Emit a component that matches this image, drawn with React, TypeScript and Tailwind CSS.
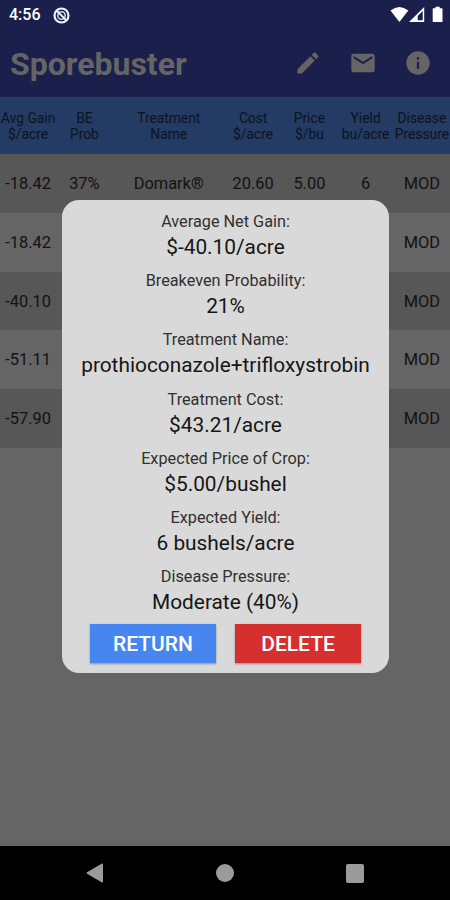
import React from "react";

const GRID = "grid grid-cols-[1fr_1fr_2fr_1fr_1fr_1fr_1fr]";

const HEADERS: [string, string][] = [
  ["Avg Gain", "$/acre"],
  ["BE", "Prob"],
  ["Treatment", "Name"],
  ["Cost", "$/acre"],
  ["Price", "$/bu"],
  ["Yield", "bu/acre"],
  ["Disease", "Pressure"],
];

const ROWS: string[][] = [
  ["-18.42", "37%", "Domark®", "20.60", "5.00", "6", "MOD"],
  ["-18.42", "", "", "", "", "", "MOD"],
  ["-40.10", "", "", "", "", "", "MOD"],
  ["-51.11", "", "", "", "", "", "MOD"],
  ["-57.90", "", "", "", "", "", "MOD"],
];

const DETAILS: [string, string][] = [
  ["Average Net Gain:", "$-40.10/acre"],
  ["Breakeven Probability:", "21%"],
  ["Treatment Name:", "prothioconazole+trifloxystrobin"],
  ["Treatment Cost:", "$43.21/acre"],
  ["Expected Price of Crop:", "$5.00/bushel"],
  ["Expected Yield:", "6 bushels/acre"],
  ["Disease Pressure:", "Moderate (40%)"],
];

function StatusBar() {
  return (
    <div className="flex h-[30px] items-center pl-[9px] pr-[7px] text-white">
      <span className="w-[32px] whitespace-nowrap text-[16px] font-medium leading-[30px]">4:56</span>
      <svg className="ml-[12px]" width="17" height="17" viewBox="0 0 17 17" fill="none" stroke="#f1f1f8">
        <circle cx="8.5" cy="8.5" r="7" strokeWidth="2.2" />
        <circle cx="8.5" cy="8.5" r="3.7" strokeWidth="1.6" strokeOpacity="0.85" />
        <path d="M4 4L13 13" strokeWidth="1.8" />
      </svg>
      <svg className="ml-auto" width="53" height="18" viewBox="0 0 53 18" fill="#fff">
        <path d="M0.500 4.600Q9.500 -2.600 18.300 4.600L9.400 16z" />
        <path fillRule="evenodd" d="M34.200 1V16H19zM32.700 5L27.700 10V14.200H32.700z" />
        <path d="M43.300 2.300h2.200V.7h4.200v1.600h2.200q.6 0 .6.6v12.500q0 .6-.6.6h-8.600q-.6 0-.6-.6V2.900q0-.6.6-.6z" />
      </svg>
    </div>
  );
}

function AppBar() {
  return (
    <div className="flex h-[67px] items-center pl-[10px] pr-[18px] text-[#656565]">
      <h1 className="text-[32px] font-bold leading-none">Sporebuster</h1>
      <div className="mb-[2px] ml-auto flex items-center gap-[27px]">
        <svg width="28" height="28" viewBox="0 0 24 24" fill="currentColor">
          <path d="M3 17.25V21h3.75L17.81 9.94l-3.75-3.75L3 17.25zM20.71 7.04a1 1 0 0 0 0-1.41l-2.34-2.34a1 1 0 0 0-1.41 0l-1.83 1.83 3.75 3.75 1.83-1.83z" />
        </svg>
        <svg width="28" height="28" viewBox="0 0 24 24" fill="currentColor">
          <path d="M20 4H4c-1.1 0-2 .9-2 2v12c0 1.100.9 2 2 2h16c1.100 0 2-.9 2-2V6c0-1.100-.9-2-2-2zm0 4l-8 5-8-5V6l8 5 8-5v2z" />
        </svg>
        <svg width="28" height="28" viewBox="0 0 24 24" fill="currentColor">
          <path d="M12 2a10 10 0 1 0 0 20 10 10 0 0 0 0-20zm1 15h-2v-6h2v6zm0-8h-2V7h2v2z" />
        </svg>
      </div>
    </div>
  );
}

function Dialog() {
  return (
    <div className="absolute left-[62px] top-[200px] flex h-[473px] w-[327px] flex-col rounded-[17px] bg-[#d9d9d9] pt-[10px] text-center">
      {DETAILS.map(([label, value]) => (
        <div key={label} className="h-[59.2px] whitespace-nowrap">
          <div className="text-[16.25px] leading-[24px] text-[#303030]">{label}</div>
          <div className="text-[20.85px] leading-[26px] text-[#161616]">{value}</div>
        </div>
      ))}
      <div className="flex justify-center gap-[19px] text-[21px] font-medium leading-[41px] text-white">
        <button className="h-[39px] w-[126px] bg-[#4786f0] shadow-[0_1px_2px_rgba(0,0,0,0.35)]">RETURN</button>
        <button className="h-[39px] w-[126px] bg-[#d62f2f] shadow-[0_1px_2px_rgba(0,0,0,0.35)]">DELETE</button>
      </div>
    </div>
  );
}

export default function App() {
  return (
    <div className="relative flex h-[900px] w-[450px] flex-col overflow-hidden bg-[#656565] font-['Roboto',sans-serif]">
      <header className="bg-[#1a204b]">
        <StatusBar />
        <AppBar />
      </header>
      <div className={`${GRID} h-[57px] items-center bg-[#243b64] text-center text-[13.8px] leading-[16px] text-[#0b1420]`}>
        {HEADERS.map(([a, b]) => (
          <div key={a} className="flex flex-col items-center whitespace-nowrap">
            <span>{a}</span>
            <span>{b}</span>
          </div>
        ))}
      </div>
      <main className="flex-1">
        {ROWS.map((row, i) => (
          <div key={i} className={`${GRID} h-[58.8px] items-center pt-[2px] text-center text-[16.4px] text-[#121212] odd:bg-[#575757]`}>
            {row.map((cell, j) => (
              <span key={j}>{cell}</span>
            ))}
          </div>
        ))}
      </main>
      <nav className="flex h-[54px] items-center justify-between bg-black pl-[86px] pr-[86px]">
        <svg width="18" height="20" viewBox="0 0 18 20" fill="#9b9b9b">
          <path d="M16 .6Q17 0 17 1.200V18.800Q17 20 16 19.400L1 10.700Q0 10 1 9.300z" />
        </svg>
        <span className="h-[18px] w-[18px] rounded-full bg-[#9b9b9b]" />
        <span className="h-[19px] w-[18px] rounded-[2px] bg-[#9b9b9b]" />
      </nav>
      <Dialog />
    </div>
  );
}
